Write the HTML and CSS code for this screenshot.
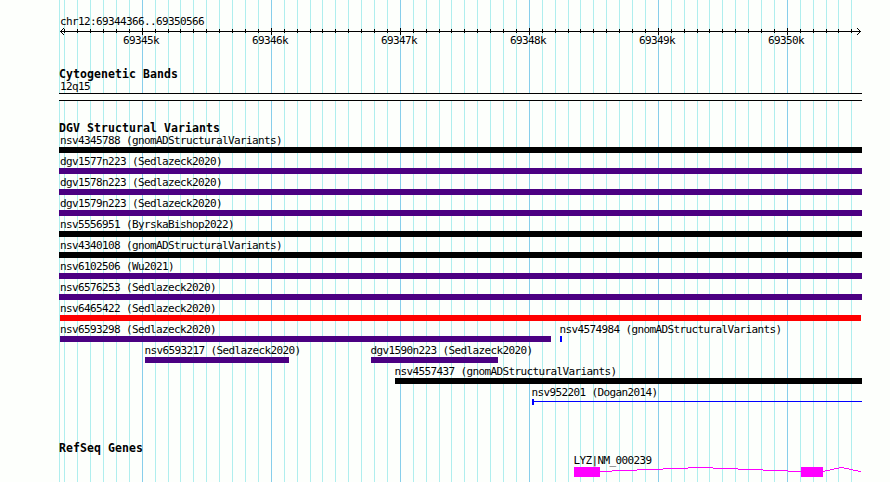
FILE: index.html
```html
<!DOCTYPE html>
<html lang="en">
<head>
    <meta charset="UTF-8">
    <title>chr12:69344366..69350566</title>
    <link rel="stylesheet" href="styles.css">
</head>
<body>
    <svg class="grid" width="890" height="482" shape-rendering="crispEdges">
        <path class="minor" d="M59.5 0V482M64.5 0V482M77.5 0V482M90.5 0V482M103.5 0V482M116.5 0V482M129.5 0V482M155.5 0V482M168.5 0V482M180.5 0V482M193.5 0V482M206.5 0V482M219.5 0V482M232.5 0V482M245.5 0V482M258.5 0V482M284.5 0V482M297.5 0V482M310.5 0V482M322.5 0V482M335.5 0V482M348.5 0V482M361.5 0V482M374.5 0V482M387.5 0V482M413.5 0V482M426.5 0V482M439.5 0V482M451.5 0V482M464.5 0V482M477.5 0V482M490.5 0V482M503.5 0V482M516.5 0V482M542.5 0V482M555.5 0V482M568.5 0V482M580.5 0V482M593.5 0V482M606.5 0V482M619.5 0V482M632.5 0V482M645.5 0V482M671.5 0V482M684.5 0V482M697.5 0V482M709.5 0V482M722.5 0V482M735.5 0V482M748.5 0V482M761.5 0V482M774.5 0V482M800.5 0V482M813.5 0V482M826.5 0V482M838.5 0V482M851.5 0V482"/>
        <path class="major" d="M142.5 0V482M271.5 0V482M400.5 0V482M529.5 0V482M658.5 0V482M787.5 0V482"/>
    </svg>

    <div class="panel">
        <div class="ruler">
            <div class="label">chr12:69344366..69350566</div>
            <svg class="axis" width="803" height="9" viewBox="59 27 803 9" shape-rendering="crispEdges">
                <path d="M60 31.5H861"/>
                <path d="M64.5 29V33M77.5 29V33M90.5 29V33M103.5 29V33M116.5 29V33M129.5 29V33M155.5 29V33M168.5 29V33M180.5 29V33M193.5 29V33M206.5 29V33M219.5 29V33M232.5 29V33M245.5 29V33M258.5 29V33M284.5 29V33M297.5 29V33M310.5 29V33M322.5 29V33M335.5 29V33M348.5 29V33M361.5 29V33M374.5 29V33M387.5 29V33M413.5 29V33M426.5 29V33M439.5 29V33M451.5 29V33M464.5 29V33M477.5 29V33M490.5 29V33M503.5 29V33M516.5 29V33M542.5 29V33M555.5 29V33M568.5 29V33M580.5 29V33M593.5 29V33M606.5 29V33M619.5 29V33M632.5 29V33M645.5 29V33M671.5 29V33M684.5 29V33M697.5 29V33M709.5 29V33M722.5 29V33M735.5 29V33M748.5 29V33M761.5 29V33M774.5 29V33M800.5 29V33M813.5 29V33M826.5 29V33M838.5 29V33M851.5 29V33"/>
                <path d="M142.5 28V35M271.5 28V35M400.5 28V35M529.5 28V35M658.5 28V35M787.5 28V35"/>
                <path d="M63 28.5H64M62 29.5H63M61 30.5H62M61 32.5H62M62 33.5H63M63 34.5H64M857 28.5H858M858 29.5H859M859 30.5H860M859 32.5H860M858 33.5H859M857 34.5H858"/>
            </svg>
            <div class="ticks">
                <span>69345k</span>
                <span>69346k</span>
                <span>69347k</span>
                <span>69348k</span>
                <span>69349k</span>
                <span>69350k</span>
            </div>
        </div>

        <div class="track bands">
            <h2>Cytogenetic Bands</h2>
            <div class="label">12q15</div>
            <div class="band"></div>
        </div>

        <div class="track variants">
            <h2>DGV Structural Variants</h2>
            <div class="row">
                <div class="feature black" style="width: 803px"><span class="label">nsv4345788 (gnomADStructuralVariants)</span></div>
            </div>
            <div class="row">
                <div class="feature indigo" style="width: 803px"><span class="label">dgv1577n223 (Sedlazeck2020)</span></div>
            </div>
            <div class="row">
                <div class="feature indigo" style="width: 803px"><span class="label">dgv1578n223 (Sedlazeck2020)</span></div>
            </div>
            <div class="row">
                <div class="feature indigo" style="width: 803px"><span class="label">dgv1579n223 (Sedlazeck2020)</span></div>
            </div>
            <div class="row">
                <div class="feature black" style="width: 803px"><span class="label">nsv5556951 (ByrskaBishop2022)</span></div>
            </div>
            <div class="row">
                <div class="feature black" style="width: 803px"><span class="label">nsv4340108 (gnomADStructuralVariants)</span></div>
            </div>
            <div class="row">
                <div class="feature indigo" style="width: 803px"><span class="label">nsv6102506 (Wu2021)</span></div>
            </div>
            <div class="row">
                <div class="feature indigo" style="width: 803px"><span class="label">nsv6576253 (Sedlazeck2020)</span></div>
            </div>
            <div class="row inset">
                <div class="feature red" style="width: 801px"><span class="label">nsv6465422 (Sedlazeck2020)</span></div>
            </div>
            <div class="row inset">
                <div class="feature indigo" style="width: 491px"><span class="label">nsv6593298 (Sedlazeck2020)</span></div>
                <div class="feature partial blue" style="margin-left: 9px; width: 2px"><span class="label">nsv4574984 (gnomADStructuralVariants)</span></div>
            </div>
            <div class="row inset">
                <div class="feature partial indigo" style="margin-left: 85px; width: 144px"><span class="label">nsv6593217 (Sedlazeck2020)</span></div>
                <div class="feature partial indigo" style="margin-left: 82px; width: 127px"><span class="label">dgv1590n223 (Sedlazeck2020)</span></div>
            </div>
            <div class="row inset">
                <div class="feature partial black" style="margin-left: 335px; width: 467px"><span class="label">nsv4557437 (gnomADStructuralVariants)</span></div>
            </div>
            <div class="row inset">
                <div class="feature partial thin" style="margin-left: 472px; width: 330px"><span class="label">nsv952201 (Dogan2014)</span></div>
            </div>
        </div>

        <div class="track genes">
            <h2>RefSeq Genes</h2>
            <div class="gene">
                <div class="label">LYZ|NM_000239</div>
                <svg width="288" height="15" viewBox="574 467 288 15" shape-rendering="crispEdges">
                    <rect x="574" y="467" width="26" height="10"/>
                    <rect x="801" y="467" width="22" height="10"/>
                    <path d="M600 471.5H612M612 470.5H637M637 469.5H663M663 468.5H688M688 467.5H713M713 468.5H738M738 469.5H763M763 470.5H788M788 471.5H801"/>
                    <path d="M823 471.5H825M825 470.5H830M830 469.5H834M834 468.5H839M839 467.5H844M844 468.5H849M849 469.5H853M853 470.5H858M858 471.5H861"/>
                </svg>
            </div>
        </div>
    </div>
</body>
</html>
```

FILE: styles.css
```css
body {
    margin: 0;
    height: 482px;
    overflow: hidden;
    background: #fdfffc;
    color: #000;
    font-family: "DejaVu Sans Mono", monospace;
    font-size: 11px;
    line-height: 11px;
    letter-spacing: -0.62px;
}
svg {
    display: block;
}
/* guide lines behind every track */
.grid {
    position: absolute;
    top: 0;
    left: 0;
    z-index: -1;
}
.grid .minor {
    stroke: #afeeee;
}
.grid .major {
    stroke: #87ceeb;
}
.panel {
    width: 803px;
    margin-left: 59px;
    padding-top: 16px;
}
.label {
    display: block;
    height: 11px;
    padding-left: 1px;
    white-space: nowrap;
}
h2 {
    margin: 0;
    height: 12px;
    font-size: 11.5px;
    line-height: 12px;
    font-weight: bold;
    letter-spacing: 0.077px;
}
.axis path {
    stroke: #000;
}
.ticks {
    display: flex;
    gap: 93px;
    height: 11px;
    margin-top: -1px;
    padding-left: 64px;
}
.ticks span {
    width: 36px;
}
.bands {
    margin-top: 22px;
}
.bands .label {
    height: 13px;
    line-height: 13px;
}
.band {
    box-sizing: border-box;
    height: 8px;
    border: solid #000;
    border-width: 1px 0;
    background: #fdfffc;
}
.variants {
    margin-top: 22px;
}
.variants h2 {
    height: 13px;
    line-height: 10px;
}
.row {
    display: flex;
    height: 21px;
}
.row .label {
    line-height: 9px;
}
.row.inset {
    padding-left: 1px;
}
.row.inset .label {
    padding-left: 0;
}
.row .partial .label {
    margin-left: -0.6px;
}
.feature {
    flex: none;
}
.feature::after {
    content: "";
    display: block;
    height: 6px;
}
.black::after {
    background: #000;
}
.indigo::after {
    background: #4b0082;
}
.red::after {
    background: #f00;
}
.blue::after {
    background: #00f;
}
.thin::after {
    height: 1px;
    border: solid #00f;
    border-width: 0 0 0 2px;
    padding: 2px 0 3px;
    background: #00f content-box;
}
.genes {
    margin-top: 34px;
}
.genes h2 {
    line-height: 10px;
}
.gene {
    margin-left: 515px;
}
.gene .label {
    height: 12px;
    margin-left: -0.6px;
    padding-left: 0;
}
.gene rect {
    fill: #f0f;
}
.gene path {
    stroke: #f0f;
}
```
